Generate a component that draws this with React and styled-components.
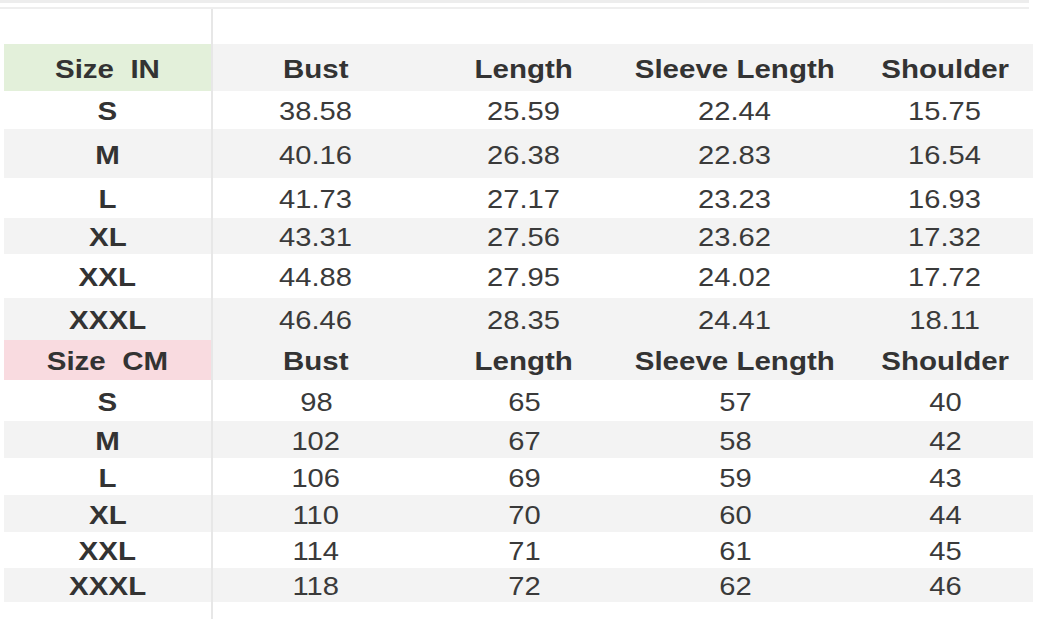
import styled, { createGlobalStyle } from "styled-components";

const GlobalStyle = createGlobalStyle`
  html, body {
    margin: 0;
    padding: 0;
    background: #ffffff;
  }
  body {
    font-family: "Liberation Sans", Arial, sans-serif;
    color: #363636;
  }
`;

const Sheet = styled.div`
  width: 1037px;
  height: 619px;
  overflow: hidden;
  background: #ffffff;
`;

const TopRule = styled.div`
  height: 4px;
  margin: 0 8px 0 0;
  border-top: 3px solid #ededed;
  border-bottom: 2px solid #eeeeee;
`;

const Row = styled.div`
  display: grid;
  grid-template-columns: 207px 2px 206px 210px 212px 192px;
  width: 1029px;
  margin-left: 4px;
  height: ${(p) => p.$h}px;
  background: ${(p) => (p.$shade ? "#f3f3f3" : "#ffffff")};
`;

const SizeCell = styled.div`
  display: flex;
  align-items: center;
  justify-content: center;
  padding-top: 3px;
  background: ${(p) => p.$tint || "transparent"};
`;

const Divider = styled.div`
  background: #e7e7e7;
`;

const Cell = styled.div`
  display: flex;
  align-items: center;
  justify-content: center;
  padding-top: 3px;
  padding-left: ${(p) => p.$shift || 0}px;
`;

const Label = styled.span`
  display: inline-block;
  font-size: 25px;
  font-weight: 700;
  color: #333333;
  white-space: pre;
  transform: scaleX(1.18);
`;

const Value = styled.span`
  display: inline-block;
  font-size: 26px;
  font-weight: 400;
  color: #3a3a3a;
  transform: scaleX(1.12);
`;

const heads = ["Bust", "Length", "Sleeve Length", "Shoulder"];

const inches = [
  { size: "S", h: 38, v: ["38.58", "25.59", "22.44", "15.75"] },
  { size: "M", h: 49, v: ["40.16", "26.38", "22.83", "16.54"] },
  { size: "L", h: 40, v: ["41.73", "27.17", "23.23", "16.93"] },
  { size: "XL", h: 36, v: ["43.31", "27.56", "23.62", "17.32"] },
  { size: "XXL", h: 44, v: ["44.88", "27.95", "24.02", "17.72"] },
  { size: "XXXL", h: 42, v: ["46.46", "28.35", "24.41", "18.11"] },
];

const cms = [
  { size: "S", h: 41, v: ["98", "65", "57", "40"] },
  { size: "M", h: 37, v: ["102", "67", "58", "42"] },
  { size: "L", h: 37, v: ["106", "69", "59", "43"] },
  { size: "XL", h: 37, v: ["110", "70", "60", "44"] },
  { size: "XXL", h: 36, v: ["114", "71", "61", "45"] },
  { size: "XXXL", h: 34, v: ["118", "72", "62", "46"] },
];

const Blank = ({ h }) => (
  <Row $h={h}>
    <SizeCell />
    <Divider />
  </Row>
);

const HeadRow = ({ title, tint, h }) => (
  <Row $h={h} $shade>
    <SizeCell $tint={tint}>
      <Label>{title}</Label>
    </SizeCell>
    <Divider />
    {heads.map((t, i) => (
      <Cell key={t} $shift={i === 3 ? 16 : 0}>
        <Label>{t}</Label>
      </Cell>
    ))}
  </Row>
);

const DataRows = ({ rows }) =>
  rows.map((r, idx) => (
    <Row key={r.size} $h={r.h} $shade={idx % 2 === 1}>
      <SizeCell>
        <Label>{r.size}</Label>
      </SizeCell>
      <Divider />
      {r.v.map((val, i) => (
        <Cell key={i} $shift={i === 3 ? 16 : 0}>
          <Value>{val}</Value>
        </Cell>
      ))}
    </Row>
  ));

export default function App() {
  return (
    <>
      <GlobalStyle />
      <Sheet>
        <TopRule />
        <Blank h={35} />
        <HeadRow title="Size  IN" tint="#e3f0da" h={47} />
        <DataRows rows={inches} />
        <HeadRow title="Size  CM" tint="#f9dbe0" h={40} />
        <DataRows rows={cms} />
        <Blank h={17} />
      </Sheet>
    </>
  );
}
